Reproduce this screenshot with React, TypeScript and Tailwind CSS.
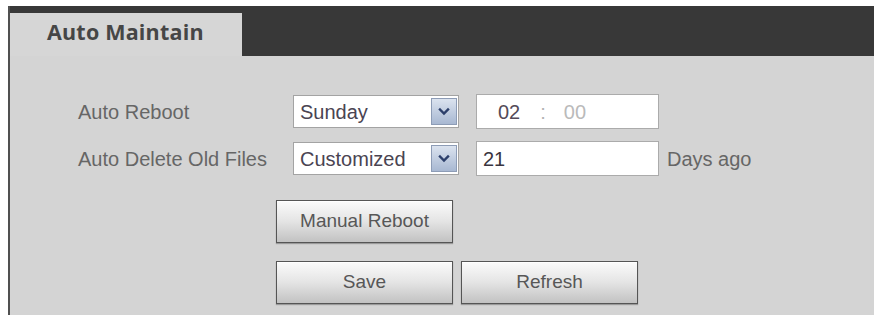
import React from "react";

const font = { fontFamily: '"Liberation Sans", Arial, sans-serif' };

const Chevron = () => (
  <svg width="12" height="9" viewBox="0 0 12 9" fill="none">
    <path d="M2 2.5 L6 6.5 L10 2.5" stroke="#2c3f6b" strokeWidth="2.4" strokeLinecap="square" />
  </svg>
);

const FakeSelect = ({ value }: { value: string }) => (
  <div className="flex h-[33px] w-[166px] items-center border border-[#a3a3a3] bg-white">
    <span className="flex-1 pl-[6px] text-[20px] leading-none text-[#4a4452]">{value}</span>
    <span className="mr-[1px] flex h-[27px] w-[26px] items-center justify-center border border-[#8d9cb6] bg-gradient-to-b from-[#dbe3ef] to-[#a8b8d2]">
      <Chevron />
    </span>
  </div>
);

const Btn = ({ label }: { label: string }) => (
  <button
    type="button"
    className="h-[43px] w-[177px] border border-[#555555] bg-gradient-to-b from-[#fbfbfb] via-[#e4e4e4] to-[#c2c2c2] text-[19px] text-[#575757] shadow-[inset_0_1px_0_#ffffff,0_1px_1px_#9a9a9a]"
  >
    {label}
  </button>
);

export default function App() {
  return (
    <div className="h-[318px] w-[876px] bg-white pl-[8px] pt-[6px]" style={font}>
      <div className="flex h-[309px] w-[866px] flex-col border-l-2 border-[#505050] bg-[#d4d4d4]">
        <div className="flex h-[50px] items-end bg-[#383838] pt-[7px]">
          <div className="flex h-[43px] w-[232px] items-center bg-[#d6d6d6] pb-[4px] pl-[37px]">
            <span
              className="text-[21.5px] font-bold tracking-[0.2px] text-[#464646]"
              style={{ fontFamily: '"Open Sans", "Noto Sans", sans-serif' }}
            >
              Auto Maintain
            </span>
          </div>
        </div>

        <div className="flex flex-col pl-[68px] pt-[38px]">
          <div className="flex h-[35px] items-center">
            <span className="w-[215px] text-[20px] text-[#666666]">Auto Reboot</span>
            <FakeSelect value="Sunday" />
            <div className="ml-[17px] flex h-[35px] w-[183px] items-center border border-[#ababab] bg-white pl-[21px] text-[20px]">
              <span className="text-[#544a58]">02</span>
              <span className="ml-[20px] text-[#b3b3b3]">:</span>
              <span className="ml-[18px] text-[#bababa]">00</span>
            </div>
          </div>

          <div className="mt-[12px] flex h-[35px] items-center">
            <span className="w-[215px] text-[20px] text-[#666666]">Auto Delete Old Files</span>
            <FakeSelect value="Customized" />
            <div className="ml-[17px] flex h-[35px] w-[183px] items-center border border-[#ababab] bg-white pl-[6px] text-[20px] text-[#3a3540]">
              21
            </div>
            <span className="ml-[8px] text-[20px] text-[#666666]">Days ago</span>
          </div>

          <div className="ml-[198px] mt-[24px] flex flex-col gap-[18px]">
            <Btn label="Manual Reboot" />
            <div className="flex gap-[8px]">
              <Btn label="Save" />
              <Btn label="Refresh" />
            </div>
          </div>
        </div>
      </div>
    </div>
  );
}
